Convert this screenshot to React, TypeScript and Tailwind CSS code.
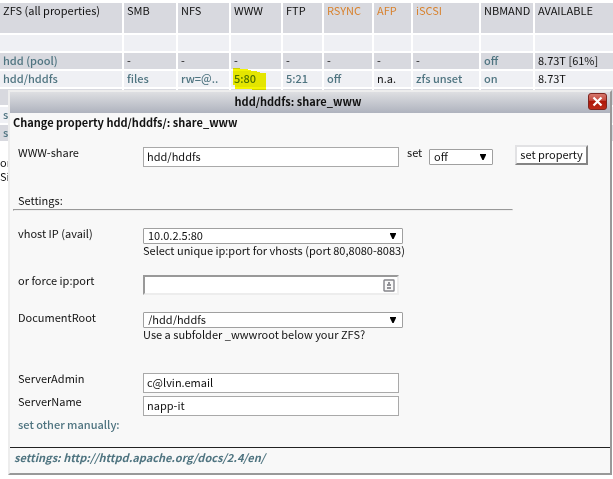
import type { ReactNode } from "react";

const columns = [
  { name: "ZFS (all properties)", width: "w-[122px]", color: "" },
  { name: "SMB", width: "w-[52px]", color: "" },
  { name: "NFS", width: "w-[51px]", color: "" },
  { name: "WWW", width: "w-[50px]", color: "" },
  { name: "FTP", width: "w-[39px]", color: "" },
  { name: "RSYNC", width: "w-[48px]", color: "text-[#d8822e]" },
  { name: "AFP", width: "w-[37px]", color: "text-[#d8822e]" },
  { name: "iSCSI", width: "w-[66px]", color: "text-[#d8822e]" },
  { name: "NBMAND", width: "w-[52px]", color: "" },
  { name: "AVAILABLE", width: "", color: "" },
];

const blank = ["", "", "", "", "", "", "", "", "", ""];

const rows = [
  blank,
  ["hdd (pool)", "-", "-", "-", "-", "-", "-", "-", "off", "8.73T [61%]"],
  ["hdd/hddfs", "files", "rw=@..", "5:80", "5:21", "off", "n.a.", "zfs unset", "on", "8.73T"],
  blank,
  ["s", "", "", "", "", "", "", "", "", ""],
  ["s", "", "", "", "", "", "", "", "", ""],
];

const plain = ["-", "n.a.", "8.73T", "8.73T [61%]"];

function PropertyTable() {
  return (
    <table className="-ml-0.5 w-[calc(100%+4px)] table-fixed border-separate border-spacing-0.5">
      <thead>
        <tr>
          {columns.map((c) => (
            <th
              key={c.name}
              className={`h-[30px] bg-[#d8d9df] pl-[3px] text-left align-top font-normal whitespace-nowrap ${c.width} ${c.color}`}
            >
              {c.name}
            </th>
          ))}
        </tr>
      </thead>
      <tbody>
        {rows.map((cells, r) => (
          <tr key={r} className={r % 2 ? "bg-[#d8d9df]" : "bg-[#eff0f4]"}>
            {cells.map((cell, c) => (
              <td key={c} className="relative h-4 p-0 pb-0.5 pl-[3px] whitespace-nowrap">
                {plain.includes(cell) ? (
                  cell
                ) : (
                  <a href="#property" className="font-medium text-[#4f7480]">
                    {cell}
                  </a>
                )}
                {cell === "5:80" && (
                  <svg
                    viewBox="0 0 33 23"
                    className="pointer-events-none absolute -top-[3px] left-0.5 z-10 h-[23px] w-[33px] mix-blend-multiply"
                    fill="#f4f400"
                    aria-hidden="true"
                  >
                    <path d="M0 0H7V1H15V2H18V3H24V4H27V5H33V22H19V21H2V17H0Z" />
                  </svg>
                )}
              </td>
            ))}
          </tr>
        ))}
      </tbody>
    </table>
  );
}

function Field({ id, label, className = "", children }: { id: string; label: string; className?: string; children: ReactNode }) {
  return (
    <div className={`flex items-start pl-2 ${className}`}>
      <label htmlFor={id} className="w-[125px] shrink-0 leading-3">
        {label}
      </label>
      {children}
    </div>
  );
}

function TextBox({ id, value }: { id: string; value: string }) {
  return (
    <input
      id={id}
      defaultValue={value}
      className="mt-px block h-5 w-64 border border-[#a9a9a9] bg-white px-[3px] pb-0.5 outline-none"
    />
  );
}

function Dropdown({ id, value, width }: { id: string; value: string; width: string }) {
  return (
    <div className={`relative ${width}`}>
      <select
        id={id}
        defaultValue={value}
        className="block h-4 w-full appearance-none rounded-[1px] border border-[#a0a0a0] bg-white px-1 pb-0.5 leading-3 outline-none"
      >
        <option>{value}</option>
      </select>
      <svg viewBox="0 0 6 6" className="pointer-events-none absolute top-[5px] right-[7px] size-1.5" aria-hidden="true">
        <path d="M0 0H6V1L3.6 6H2.4L0 1Z" fill="#000" />
      </svg>
    </div>
  );
}

function CloseIcon() {
  return (
    <svg viewBox="0 0 19 17" className="h-[17px] w-[19px]" aria-hidden="true">
      <defs>
        <linearGradient id="close-red" x1="0" y1="0" x2="0" y2="1">
          <stop offset="0" stopColor="#d77b70" />
          <stop offset="0.42" stopColor="#c54b3f" />
          <stop offset="0.5" stopColor="#ae1809" />
          <stop offset="1" stopColor="#bd2d1c" />
        </linearGradient>
      </defs>
      <rect x="0.5" y="0.5" width="18" height="16" rx="2.5" fill="url(#close-red)" stroke="#7e2620" />
      <path d="M5.5 4.5L13.5 12.5M13.5 4.5L5.5 12.5" stroke="#fff" strokeWidth="2.2" />
    </svg>
  );
}

function ContactIcon() {
  return (
    <svg viewBox="0 0 12 13" className="h-[13px] w-3" aria-hidden="true">
      <rect x="1" y="1" width="10" height="11" rx="0.5" fill="#f8f8f8" stroke="#85858b" strokeWidth="1.4" />
      <path d="M5 3H7V5H8V7H4V5H5ZM4 8H8V10H4Z" fill="#929297" />
    </svg>
  );
}

function PropertyDialog() {
  return (
    <form
      role="dialog"
      aria-labelledby="dialog-title"
      onSubmit={(e) => e.preventDefault()}
      className="absolute top-[90px] right-px left-2 border-2 border-t-[#ededed] border-r-[#999] border-b-[#999] border-l-[#ededed] bg-[#f8f8f8]"
    >
      <header className="relative flex h-[21px] items-center justify-center bg-linear-to-b from-[#dedfe2] to-[#afb3be] pr-6">
        <h1 id="dialog-title" className="pb-1 font-bold">
          hdd/hddfs: share_www
        </h1>
        <button type="button" aria-label="Close" className="absolute top-px right-[3px]">
          <CloseIcon />
        </button>
      </header>

      <h2 className="mt-0.5 pl-[3px] font-bold">Change property hdd/hddfs/: share_www</h2>

      <Field id="share" label="WWW-share" className="mt-[17px]">
        <TextBox id="share" value="hdd/hddfs" />
        <label htmlFor="state" className="ml-2 w-[22px] leading-3">
          set
        </label>
        <div className="pt-[3px]">
          <Dropdown id="state" value="off" width="w-16" />
        </div>
        <button
          type="submit"
          className="-mt-px ml-[22px] h-5 w-[73px] border-2 border-t-[#e2e2e4] border-r-[#858585] border-b-[#858585] border-l-[#e2e2e4] bg-white pb-0.5 whitespace-nowrap"
        >
          set property
        </button>
      </Field>

      <h3 className="mt-[26px] pl-2">Settings:</h3>
      <hr className="mt-0.5 ml-[3px] h-0.5 w-[500px] max-w-full border border-t-[#999] border-r-[#eee] border-b-[#eee] border-l-[#999]" />

      <Field id="vhost" label="vhost IP (avail)" className="mt-4">
        <div className="pt-px">
          <Dropdown id="vhost" value="10.0.2.5:80" width="w-[260px]" />
          <p className="pb-0.5 leading-3">Select unique ip:port for vhosts (port 80,8080-8083)</p>
        </div>
      </Field>

      <Field id="force" label="or force ip:port" className="mt-4">
        <div className="mt-px flex h-5 w-64 items-center border-2 border-t-[#999] border-r-[#ededed] border-b-[#ededed] border-l-[#999] bg-white pr-0.5">
          <input id="force" className="h-4 min-w-0 flex-1 px-0.5 outline-none" />
          <ContactIcon />
        </div>
      </Field>

      <Field id="root-folder" label="DocumentRoot" className="mt-4">
        <div className="pt-px">
          <Dropdown id="root-folder" value="/hdd/hddfs" width="w-[260px]" />
          <p className="pb-0.5 leading-3">Use a subfolder _wwwroot below your ZFS?</p>
        </div>
      </Field>

      <Field id="admin" label="ServerAdmin" className="mt-[30px]">
        <TextBox id="admin" value="c@lvin.email" />
      </Field>
      <Field id="server" label="ServerName" className="mt-0.5">
        <TextBox id="server" value="napp-it" />
      </Field>
      <a href="#manual" className="mt-0.5 block pb-0.5 pl-2 leading-3 font-medium text-[#4f7480]">
        set other manually:
      </a>

      <footer className="mt-[15px] border-t border-[#222] pt-[3px] pb-2 pl-1">
        <a href="#docs" className="block pb-0.5 leading-3 font-bold text-[#4f7480] italic">
          settings: http://httpd.apache.org/docs/2.4/en/
        </a>
      </footer>
    </form>
  );
}

export default function App() {
  return (
    <div className="relative min-h-screen overflow-hidden bg-white pt-px font-['Noto_Sans_CJK_SC',sans-serif] text-[11px] leading-[14px] text-[#111]">
      <PropertyTable />
      <p className="mt-3 w-2">or Si</p>
      <PropertyDialog />
    </div>
  );
}
